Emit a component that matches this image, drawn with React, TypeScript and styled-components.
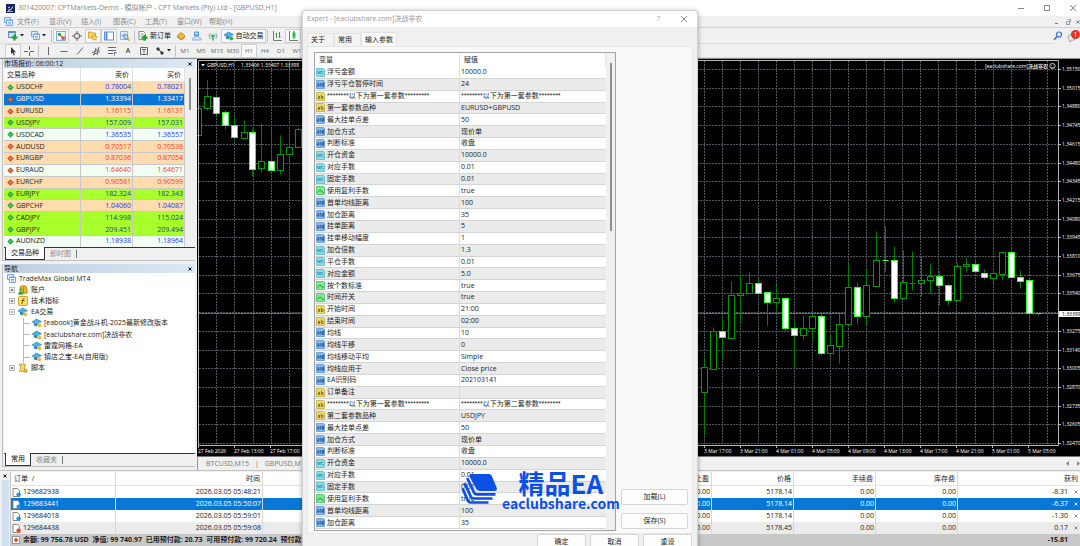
import React from "react";
import styled, { createGlobalStyle, css } from "styled-components";

const Global = createGlobalStyle`
  * { box-sizing: border-box; }
  html, body { margin: 0; padding: 0; }
  body {
    font-family: "Open Sans", "Noto Sans CJK SC", sans-serif;
    font-size: 7px;
    line-height: 10px;
    color: #1c1c1c;
    background: #f0f0f0;
  }
  button {
    font: inherit;
    color: inherit;
    background: none;
    border: 0;
    padding: 0;
    margin: 0;
    white-space: nowrap;
  }
  table { border-spacing: 0; border-collapse: separate; table-layout: fixed; }
  th, td { padding: 0; font-weight: 400; text-align: left; white-space: nowrap; overflow: hidden; }
  svg { display: block; flex: none; }
`;

/* ---------- shell ---------- */

const Page = styled.div`
  position: relative;
  display: flex;
  flex-direction: column;
  height: 100vh;
  overflow: hidden;
  background: #f0f0f0;
`;

const TitleBar = styled.header`
  display: flex;
  align-items: center;
  flex: none;
  height: 16px;
  padding: 0 3px 0 6px;
  gap: 3px;
  background: #fff;
  color: #868686;
`;

const Spacer = styled.div`
  flex: 1;
`;

const WindowButtons = styled.div<{ $gap: number }>`
  display: flex;
  align-items: center;
  gap: ${(p) => p.$gap}px;
`;

const MenuBar = styled.nav`
  display: flex;
  align-items: center;
  flex: none;
  height: 12px;
  padding-left: 4px;
  border-bottom: 1px solid #d2d2d2;
  color: #8c8c8c;
`;

const MenuItem = styled.button`
  width: 32px;
  text-align: left;
`;

const MenuIcon = styled.span`
  width: 13px;
`;

const ToolBars = styled.div`
  display: flex;
  flex: none;
  height: 31px;
  border-bottom: 1px solid #8e8e8e;
`;

const ToolRows = styled.div`
  flex: 1;
`;

const ToolBar = styled.div<{ $height: number }>`
  display: flex;
  align-items: center;
  height: ${(p) => p.$height}px;
  padding-left: 5px;
  border-bottom: 1px solid #dedede;
`;

const Tool = styled.button<{ $width?: number; $on?: boolean; $dim?: boolean }>`
  display: flex;
  align-items: center;
  justify-content: center;
  gap: 2px;
  width: ${(p) => p.$width ?? 16}px;
  height: 14px;
  ${(p) =>
    p.$on &&
    css`
      background: #f8f8f8;
      border: 1px solid #cfcfcf;
    `}
  color: ${(p) => (p.$dim ? "#666" : "#111")};
  font-size: ${(p) => (p.$dim ? 6 : 7)}px;
`;

const Divider = styled.span`
  width: 1px;
  height: 12px;
  margin: 0 1px;
  background: #c4c4c4;
`;

const Alerts = styled.div`
  display: flex;
  align-items: flex-start;
  gap: 4px;
  padding-top: 3px;
`;

const BellButton = styled.button`
  position: relative;
  width: 13px;
  height: 12px;
`;

const Badge = styled.span`
  position: absolute;
  right: 0;
  top: -1px;
  width: 9px;
  height: 9px;
  border-radius: 5px;
  background: #e23222;
  color: #fff;
  line-height: 9px;
  text-align: center;
`;

const Workspace = styled.div`
  display: flex;
  flex: 1;
  min-height: 0;
`;

/* ---------- left docks ---------- */

const Docks = styled.aside`
  display: flex;
  flex-direction: column;
  flex: none;
  width: 197px;
  padding: 0 2px 3px 2px;
  gap: 3px;
`;

const Dock = styled.section<{ $grow?: boolean }>`
  display: flex;
  flex-direction: column;
  min-height: 0;
  border: solid #c0c0c0;
  border-width: 0 0 1px 1px;
  padding-left: 1px;
  ${(p) => p.$grow && "flex: 1;"}
`;

const DockTitle = styled.div`
  display: flex;
  align-items: center;
  justify-content: space-between;
  flex: none;
  height: 9px;
  padding-right: 3px;
  background: linear-gradient(90deg, #bccfe2, #dbe8f5);
  line-height: 9px;
`;

const DockTabs = styled.div`
  display: flex;
  flex: none;
  height: 13px;
  padding-left: 1px;
  border-top: 1px solid #333;
`;

const DockTab = styled.button<{ $on?: boolean }>`
  height: 12px;
  padding: 0 5px;
  color: ${(p) => (p.$on ? "#111" : "#8a8a8a")};
  ${(p) =>
    p.$on &&
    css`
      margin-top: -1px;
      height: 13px;
      background: #fff;
      border: solid #333;
      border-width: 0 1px 1px 1px;
    `}
`;

const TabBar = styled.span`
  width: 1px;
  height: 8px;
  margin-top: 2px;
  background: #777;
`;

const QuoteArea = styled.div`
  display: flex;
  height: 179px;
  overflow: hidden;
`;

const QuoteTable = styled.table`
  width: 181px;
  height: 180px;
  flex: none;

  th {
    height: 14px;
    background: #fff;
    border: solid #e2e2e2;
    border-width: 0 1px 1px 0;
    padding: 0 3px;
  }
  td {
    border: solid #c8c8c8;
    border-width: 0 1px 1px 0;
    padding: 0 1px 0 3px;
  }
  th + th, td + td { text-align: right; }
`;

type Tone = "sand" | "lime" | "mint" | "pick";

const tones: Record<Tone, string> = {
  sand: "#ffdcae",
  lime: "#a9ff2b",
  mint: "#f0fff2",
  pick: "#0878d8",
};

const QuoteRow = styled.tr<{ $tone: Tone; $ink: string }>`
  background: ${(p) => tones[p.$tone]};
  color: ${(p) => (p.$tone === "pick" ? "#fff" : "#222")};
  td + td { color: ${(p) => p.$ink}; }
`;

const Scroll = styled.div<{ $top: number; $length: number }>`
  flex: 1;
  background: #f0f0f0;
  padding: ${(p) => p.$top}px 0 0 4px;

  &::before {
    content: "";
    display: block;
    width: 2px;
    height: ${(p) => p.$length}px;
    background: #8f8f8f;
  }
`;

const CellLine = styled.span<{ $gap?: number }>`
  display: flex;
  align-items: center;
  height: 10px;
  gap: ${(p) => p.$gap ?? 3}px;
`;

const Tree = styled.div`
  flex: 1;
  background: #fff;
`;

const TreeRows = styled.ul`
  display: grid;
  grid-auto-rows: 1fr;
  height: 101px;
  margin: 0;
  padding: 0;
  list-style: none;
`;

const TreeRow = styled.li<{ $level: number }>`
  display: flex;
  align-items: center;
  gap: ${(p) => (p.$level === 2 ? 2 : 3)}px;
  padding-left: ${(p) => [3, 5, 19][p.$level]}px;
  white-space: nowrap;
`;

const Branch = styled.span`
  width: 7px;
  height: 100%;
  border-left: 1px solid #bbb;
  background: linear-gradient(#bbb, #bbb) 0 5px / 7px 1px no-repeat;
`;

/* ---------- chart ---------- */

const ChartColumn = styled.main`
  display: flex;
  flex-direction: column;
  flex: 1;
  min-width: 0;
`;

const ChartFrame = styled.div`
  flex: 1;
  min-height: 0;
  overflow: hidden;
  background: #000;
  border-bottom: 1px solid #777;

  svg { width: 100%; height: 100%; }
  text { font-size: 5px; font-weight: 500; fill: #fff; }
`;

const ChartTabs = styled.div`
  display: flex;
  align-items: center;
  flex: none;
  height: 13px;
  padding: 0 0 0 8px;
  gap: 6px;
  border-left: 1px solid #999;
  color: #777;
`;

const Arrows = styled.div`
  display: flex;
  gap: 8px;
  margin-left: auto;
`;

/* ---------- terminal ---------- */

const Terminal = styled.section`
  display: flex;
  flex: none;
  height: 76px;
  padding-top: 1px;
  border-top: 1px solid #c2c2c2;
`;

const TerminalRail = styled.div`
  display: flex;
  flex-direction: column;
  align-items: center;
  gap: 2px;
  width: 11px;
  flex: none;
  padding-top: 2px;
  border-right: 1px solid #c2c2c2;

  &::after {
    content: "";
    flex: 1;
    width: 7px;
    background: #cfe0f2;
  }
`;

const OrderTable = styled.table`
  flex: 1;
  width: 100%;
  height: 74px;
  background: #fff;

  th, td {
    text-align: right;
    padding: 0 1px;
    border-right: 1px solid #d8d8d8;
  }
  th { height: 14px; padding-right: 2px; border-bottom: 1px solid #e2e2e2; }
  th:first-child, td:first-child { text-align: left; }
  th:first-child { padding-left: 3px; }
  th:last-child, td:last-child { border-right: 0; }
`;

const OrderRow = styled.tr<{ $state: string }>`
  background: ${(p) => (p.$state === "pick" ? "#0878d8" : p.$state === "alt" ? "#ebebeb" : "#fff")};
  color: ${(p) => (p.$state === "pick" ? "#fff" : "#222")};
`;

const SumRow = styled.tr`
  background: #c8c8c8;

  td { border: 0; font-weight: 700; overflow: hidden; }
  td:last-child { padding-right: 12px; }
`;

const SumLine = styled(CellLine)`
  white-space: pre;
`;

const Profit = styled.span`
  display: flex;
  align-items: center;
  justify-content: flex-end;
  gap: 6px;
  padding-right: 1px;
`;

/* ---------- dialog ---------- */

const Dialog = styled.section`
  position: absolute;
  top: 10px;
  left: calc(50% - 238px);
  width: 396px;
  height: 546px;
  display: flex;
  flex-direction: column;
  overflow: hidden;
  border: 1px solid #d0d0d0;
  border-radius: 4px;
  background: #f0f0f0;
  box-shadow: 0 1px 5px rgba(0, 0, 0, 0.35);
`;

const DialogTitle = styled.header`
  display: flex;
  align-items: center;
  justify-content: space-between;
  height: 16px;
  padding: 0 9px 0 4px;
  background: #fff;
  color: #979797;
`;

const DialogTabs = styled.div`
  display: flex;
  align-items: flex-end;
  height: 19px;
  padding-left: 4px;
`;

const DialogTab = styled.button<{ $on?: boolean }>`
  width: ${(p) => (p.$on ? 36 : 27)}px;
  height: ${(p) => (p.$on ? 14 : 13)}px;
  padding-left: 3px;
  text-align: left;
  border: 1px solid #e4e4e4;
  border-bottom: 0;
  background: ${(p) => (p.$on ? "#fafafa" : "#f3f3f3")};
`;

const DialogPanel = styled.div`
  display: flex;
  align-items: flex-end;
  gap: 5px;
  margin: 0 4px;
  padding: 5px 4px 2px 6px;
  border: 1px solid #e6e6e6;
  background: #f9f9f9;
`;

const ParamBox = styled.div`
  display: flex;
  width: 302px;
  height: 479px;
  border: 1px solid #a2a2aa;
  background: #fff;
`;

const ParamTable = styled.table`
  width: 291px;
  height: 476px;
  flex: none;

  th { height: 14px; padding-left: 4px; border-right: 1px solid #e4e4e4; }
  td { border-bottom: 1px solid #d4d4d4; border-right: 1px solid #dcdcdc; }
  td:first-child { padding-left: 1px; }
  td:last-child { padding-left: 1px; border-right-color: transparent; }
  tbody tr:nth-child(even) { background: #ebebeb; }
`;

const ParamRow = styled.tr<{ $heading: boolean }>`
  ${(p) => p.$heading && `font-family: "Liberation Sans", "Noto Sans CJK SC", sans-serif;`}
`;

const SideButtons = styled.div`
  display: flex;
  flex-direction: column;
  flex: 1;
  gap: 8px;
  padding-bottom: 2px;
`;

const PushButton = styled.button`
  height: 16px;
  min-width: 49px;
  border: 1px solid #d6d6d6;
  border-radius: 2px;
  background: #fdfdfd;
`;

const DialogFoot = styled.footer`
  display: flex;
  justify-content: flex-end;
  gap: 4px;
  padding-right: 5px;
`;

const Brand = styled.div`
  position: absolute;
  left: calc(50% - 79px);
  top: 470px;
  display: flex;
  align-items: flex-start;
  gap: 5px;
  color: #0b50e6;
  font-family: "Noto Sans CJK SC", sans-serif;
  font-weight: 700;
  white-space: nowrap;

  svg { margin-top: 4px; }
`;

const BrandText = styled.div`
  display: flex;
  flex-direction: column;
  align-items: center;
`;

const BrandName = styled.div`
  font-size: 26px;
  line-height: 26px;
`;

const BrandSite = styled.div`
  font-size: 14px;
  line-height: 14px;
`;

/* ---------- icons ---------- */

const Svg = ({ w = 10, h = 10, box, children }: { w?: number; h?: number; box?: string; children: React.ReactNode }) => (
  <svg width={w} height={h} viewBox={box ?? `0 0 ${w} ${h}`} fill="none" aria-hidden="true">
    {children}
  </svg>
);

const Caret = () => (
  <Svg w={4} h={3}>
    <path d="M0 0h4L2 2.5z" fill="#222" />
  </Svg>
);

const Close = ({ size = 4, color = "#111" }: { size?: number; color?: string }) => (
  <Svg w={size} h={size} box="0 0 8 8">
    <path d="M1 1l6 6M7 1L1 7" stroke={color} strokeWidth={size > 5 ? 1 : 2} />
  </Svg>
);

const Plus = ({ x, y }: { x: number; y: number }) => (
  <path d={`M${x} ${y - 3}v6M${x - 3} ${y}h6`} stroke="#15a32c" strokeWidth="2.2" />
);

const AppIcon = () => (
  <Svg w={9} h={9}>
    <rect width="9" height="9" fill="#14265c" />
    <path d="M2 6.5l3-1 2-3M2 4l2-1" stroke="#e8eefc" />
    <path d="M1 7.5h6" stroke="#8fb0ea" />
  </Svg>
);

const Windows = () => (
  <Svg w={9} h={9}>
    <path d="M.5.5h6v5h-6z" fill="#dceafd" stroke="#76a5e4" />
    <path d="M2.5 3h6v5.5h-6z" fill="#fff" stroke="#76a5e4" />
    <path d="M2.5 3.5h6M4 5.5h3M4 7h3" stroke="#76a5e4" />
  </Svg>
);

const NewChart = () => (
  <Svg>
    <path d="M.5.5h7v6h-7z" fill="#cfe2f8" stroke="#5b8ccc" />
    <path d="M.5 1.5h7" stroke="#5b8ccc" />
    <Plus x={6.5} y={6.5} />
  </Svg>
);

const MarketIcon = () => (
  <Svg>
    <rect x=".5" y=".5" width="9" height="9" fill="#e9f2fd" stroke="#7fabe0" />
    <path d="M2 3.500h3M3.500 2v3" stroke="#22a438" strokeWidth="1.800" />
    <path d="M5 5l3 3M8 5.500V8H5.500" stroke="#e2472c" strokeWidth="1.600" />
  </Svg>
);

const Target = () => (
  <Svg>
    <circle cx="5" cy="5" r="2.800" stroke="#666" />
    <path d="M5 0v3.600M5 6.400V10M0 5h3.600M6.400 5H10" stroke="#666" />
  </Svg>
);

const FolderStar = () => (
  <Svg>
    <path d="M.5 1h3l1 1h3v5h-7z" fill="#f7d35c" stroke="#d3a63a" />
    <path d="M6.500 3.600l.9 1.900 2.100.2-1.600 1.500.5 2.100-1.900-1.100-1.900 1.100.5-2.100-1.600-1.500 2.100-.2z" fill="#fdea4e" stroke="#c99a20" strokeWidth=".7" />
  </Svg>
);

const PanelIcon = () => (
  <Svg>
    <rect x=".5" y="1" width="9" height="8" fill="#fff" stroke="#5b90d8" />
    <path d="M2.500 1v8" stroke="#5b90d8" strokeWidth="2" />
  </Svg>
);

const TesterIcon = () => (
  <Svg>
    <path d="M.5.5h7v8h-7z" fill="#e8f1fc" stroke="#8db1df" />
    <path d="M1.500 3.500l1.500 2 1.500-3 1.500 2" stroke="#6d98d0" />
    <circle cx="6" cy="6" r="2" fill="#d6eafc" stroke="#5b86b8" />
    <path d="M7.500 7.500L9.500 9.700" stroke="#c89a2c" strokeWidth="1.300" />
  </Svg>
);

const NewOrder = () => (
  <Svg>
    <path d="M1 .5h4.500l2 2v6H1z" fill="#fff" stroke="#888" />
    <path d="M2.500 3h3M2.500 5h2" stroke="#999" />
    <Plus x={6.5} y={6.7} />
  </Svg>
);

const BookIcon = () => (
  <Svg>
    <path d="M1 5l4-3.500L9 5 5.500 8.500z" fill="#f0b93a" stroke="#b37d14" strokeWidth=".8" />
    <path d="M1 5.200v1.400l4.500 3L9 6.400V5L5.500 8.400z" fill="#d08f1c" />
  </Svg>
);

const CloudUser = () => (
  <Svg>
    <rect x="2" y=".5" width="5" height="5" rx="1" fill="#4f97e6" />
    <circle cx="4.500" cy="2.600" r="1.200" fill="#d9ebfd" />
    <path d="M.8 9c-.6-2 1-3 2-2.600C4 4.800 6.400 5 7 6.600c1.800 0 2.400 1 2 2.400z" fill="#d7e7fa" stroke="#6c9fdc" strokeWidth=".8" />
  </Svg>
);

const Signal = () => (
  <Svg>
    <path d="M2.500 8a4 4 0 0 1 0-6M7.500 8a4 4 0 0 0 0-6" stroke="#79a5d8" />
    <path d="M3.800 6.500a2 2 0 0 1 0-3M6.200 6.500a2 2 0 0 0 0-3" stroke="#5aa87a" />
    <path d="M5 4.500V9.500" stroke="#2fa648" strokeWidth="1.400" />
    <circle cx="5" cy="4.500" r="1" fill="#2fa648" />
  </Svg>
);

const Hat = ({ mark = "#f1b52c" }: { mark?: string }) => (
  <Svg>
    <path d="M2 4.500h5v3q-2.500 1.500-5 0z" fill="#2f7eb4" />
    <path d="M0 4l4.500-3L9.500 3.600 5 6.400z" fill="#4eb2e4" stroke="#2a7cad" strokeWidth=".6" />
    <circle cx="7.400" cy="7.400" r="2.100" fill={mark} stroke="#fff" strokeWidth=".4" />
  </Svg>
);

const BarsIcon = () => (
  <Svg>
    <path d="M1.500 0v9.500H10" stroke="#777" />
    <path d="M4.500 2v5M4.500 3h-1M7.500 1v6M7.500 6h1" stroke="#22a438" />
  </Svg>
);

const CandlesIcon = () => (
  <Svg>
    <path d="M1.500 0v9.500H10" stroke="#777" />
    <path d="M6 0v8" stroke="#15892a" />
    <rect x="4.500" y="1.500" width="3" height="5" fill="#2fc04a" />
  </Svg>
);

const SearchIcon = () => (
  <Svg>
    <circle cx="6" cy="3.600" r="2.600" stroke="#3a6fd2" strokeWidth="1.200" />
    <path d="M4 5.600L1 8.800" stroke="#3a6fd2" strokeWidth="1.600" />
  </Svg>
);

const Stroke = ({ d }: { d: string }) => (
  <Svg>
    <path d={d} stroke="#666" />
  </Svg>
);

const Tick = ({ up }: { up: boolean }) => (
  <Svg w={7} h={7}>
    <path d="M3.500 .8L6.200 3.500 3.500 6.200.8 3.500z" fill={up ? "#2cb845" : "#e4572e"} stroke={up ? "#1d8f34" : "#b8441f"} strokeWidth=".8" />
    <path d="M3.500 2.600v1.800M2.600 3.500h1.800" stroke={up ? "#7fdd90" : "#ff9d7c"} strokeWidth=".6" />
  </Svg>
);

const Expander = ({ open }: { open?: boolean }) => (
  <Svg w={6} h={6} box="0 0 7 7">
    <rect x=".5" y=".5" width="6" height="6" fill="#fff" stroke="#b0b0b0" />
    <path d={open ? "M2 3.500h3" : "M2 3.500h3M3.500 2v3"} stroke="#3f4f80" />
  </Svg>
);

const Accounts = () => (
  <Svg>
    <path d="M2 1.500q3-2 6.500 0L9.500 8 2.500 9z" fill="#e5b430" stroke="#a97f14" strokeWidth=".7" />
    <path d="M5.500 2v6" stroke="#a97f14" />
    <circle cx="2.600" cy="4.800" r="1.400" fill="#37b64c" />
    <path d="M0 9.500q.5-3 2.600-3t2.600 3z" fill="#23a03a" />
  </Svg>
);

const FuncIcon = () => (
  <Svg>
    <rect x=".5" y=".5" width="9" height="9" rx="1" fill="#f8e06a" stroke="#c8a52c" />
    <path d="M6.500 2.500q-1.400-.4-1.600 1.200L4.400 6.600q-.2 1.400-1.400 1M3.500 4.500h3" stroke="#6c5510" />
  </Svg>
);

const ScriptIcon = () => (
  <Svg>
    <path d="M1.500 1h6v1.600h-1v4.400h1.500v1.600H1.500V7h1V2.600h-1z" fill="#f7d667" stroke="#bd9125" strokeWidth=".7" />
    <circle cx="7.600" cy="7.800" r="1.800" fill="#f1b52c" stroke="#a97f14" strokeWidth=".5" />
  </Svg>
);

const OrderIcon = ({ color = "#2c8fe0" }: { color?: string }) => (
  <Svg w={9} h={9}>
    <path d="M1 .5h4.500l2 2v6H1z" fill="#fff" stroke="#8a8a8a" />
    <circle cx="6.600" cy="6.600" r="2.200" fill={color} />
  </Svg>
);

type Kind = "v" | "i" | "s" | "b";

const kindColors: Record<Kind, [string, string, string]> = {
  v: ["#8adbe8", "#5ab8c8", "#2a8594"],
  i: ["#86baec", "#5a94d0", "#1f5090"],
  s: ["#ecdc74", "#c0aa3c", "#6f5f14"],
  b: ["#80ea90", "#45bb5a", "#14782a"],
};

const KindIcon = ({ kind }: { kind: Kind }) => {
  const [fill, edge, ink] = kindColors[kind];
  const marks: Record<Kind, string> = {
    v: "M1.500 3l1.200 3L4 3M5 6V3M5 3.500h1.500M6.500 5.500h1",
    i: "M1.500 3.500h1v3M2 5H1.500v1.500M4 6.500v-3h1v3M7.500 3.500h-1v3h1v-4",
    s: "M2 4.200H3.500v2.300H2.300V5.300H3.500M5.300 2.500v4H7V4.500H5.300",
    b: "M1.500 6.500L4 3.800l2 2.200 1.800.5",
  };
  return (
    <Svg w={9} h={9}>
      <path d="M.5.5h7l1 1v7h-8z" fill={fill} stroke={edge} strokeWidth=".8" />
      <path d={marks[kind]} stroke={ink} strokeWidth=".8" />
    </Svg>
  );
};

const BrandMark = () => (
  <Svg w={36} h={30}>
    <path d="M10.500 0h17.500q2 0 2.700 1.700L35.800 14q.8 3-2.300 3H19q-2.500 0-3.700-2L8.700 3Q8 0 10.500 0z" fill="#0b50e6" />
    <g stroke="#0b50e6" strokeWidth="2.700" strokeLinejoin="round">
      <path d="M6.200 4L13 18.500q1 1.900 3 1.900H34.500" />
      <path d="M3.600 9L9.800 22.600q1 1.900 3 1.900H31.500" />
      <path d="M1.600 14.500L6.800 26.600q1 1.900 3 1.900H27.500" />
    </g>
  </Svg>
);

/* ---------- data ---------- */

const menus = ["文件(F)", "显示(V)", "插入(I)", "图表(C)", "工具(T)", "窗口(W)", "帮助(H)"];
const frames = ["M1", "M5", "M15", "M30", "H1", "H4", "D1", "W1"];

const blue = "#2a2aff";
const red = "#ff3a1c";
const navy = "#1a3a9a";

const quotes: [string, string, string, Tone, string, boolean][] = [
  ["USDCHF", "0.78004", "0.78021", "sand", blue, true],
  ["GBPUSD", "1.33394", "1.33417", "pick", "#fff", false],
  ["EURUSD", "1.16115", "1.16131", "sand", red, false],
  ["USDJPY", "157.009", "157.031", "lime", navy, true],
  ["USDCAD", "1.36535", "1.36557", "mint", blue, true],
  ["AUDUSD", "0.70517", "0.70536", "sand", red, false],
  ["EURGBP", "0.87036", "0.87054", "sand", red, false],
  ["EURAUD", "1.64640", "1.64671", "mint", red, false],
  ["EURCHF", "0.90581", "0.90599", "sand", red, false],
  ["EURJPY", "182.324", "182.343", "lime", navy, true],
  ["GBPCHF", "1.04060", "1.04087", "sand", blue, true],
  ["CADJPY", "114.998", "115.024", "lime", navy, true],
  ["GBPJPY", "209.451", "209.494", "lime", navy, true],
  ["AUDNZD", "1.18938", "1.18964", "mint", blue, true],
];

const experts = ["[eabook]黄金战斗机-2025最新修改版本", "[eaclubshare.com]决战非农", "雷霆网格-EA", "镇店之宝-EA(自用版)"];

const params: [Kind, string, string][] = [
  ["v", "浮亏金额", "10000.0"],
  ["i", "浮亏平仓暂停时间", "24"],
  ["s", "********以下为第一套参数*********", "********以下为第一套参数********"],
  ["s", "第一套参数品种", "EURUSD+GBPUSD"],
  ["i", "最大挂单点差", "50"],
  ["i", "加仓方式", "现价单"],
  ["i", "判断标准", "收盘"],
  ["v", "开仓资金", "10000.0"],
  ["v", "对应手数", "0.01"],
  ["v", "固定手数", "0.01"],
  ["b", "使用复利手数", "true"],
  ["i", "首单均线距离", "100"],
  ["i", "加仓距离", "35"],
  ["i", "挂单距离", "5"],
  ["i", "挂单移动幅度", "1"],
  ["v", "加仓倍数", "1.3"],
  ["v", "平仓手数", "0.01"],
  ["v", "对应金额", "5.0"],
  ["b", "按个数标准", "true"],
  ["b", "时间开关", "true"],
  ["s", "开始时间", "21:00"],
  ["s", "结束时间", "02:00"],
  ["i", "均线", "10"],
  ["i", "均线平移", "0"],
  ["i", "均线移动平均", "Simple"],
  ["i", "均线应用于", "Close price"],
  ["i", "EA识别码", "202103141"],
  ["s", "订单备注", ""],
  ["s", "********以下为第一套参数*********", "********以下为第二套参数********"],
  ["s", "第二套参数品种", "USDJPY"],
  ["i", "最大挂单点差", "50"],
  ["i", "加仓方式", "现价单"],
  ["i", "判断标准", "收盘"],
  ["v", "开仓资金", "10000.0"],
  ["v", "对应手数", "0.01"],
  ["v", "固定手数", "0.01"],
  ["b", "使用复利手数", "true"],
  ["i", "首单均线距离", "100"],
  ["i", "加仓距离", "35"],
];

const orders: [string, string, string, string, string, string, string][] = [
  ["129682938", "2026.03.05 05:48:21", "5178.14", "-8.31", "", "#2c8fe0", "#888"],
  ["129683441", "2026.03.05 05:50:07", "5178.14", "-6.37", "pick", "#2c8fe0", "#dfeaf6"],
  ["129684018", "2026.03.05 05:59:01", "5178.14", "-1.30", "", "#2c8fe0", "#888"],
  ["129684438", "2026.03.05 05:59:08", "5178.45", "0.17", "alt", "#e04a2a", "#888"],
];

/* x, high, low, body top, body bottom, falling; three units to a pixel */
type Candle = [number, number, number, number, number, number];

const recent: Candle[] = [
  [28, 476, 705, 502, 575, 0], [55, 380, 505, 394, 506, 0], [82, 353, 478, 394, 412, 1],
  [109, 242, 415, 286, 415, 0], [136, 222, 368, 278, 286, 0], [163, 216, 278, 250, 278, 0],
  [190, 234, 280, 250, 280, 1], [217, 275, 374, 275, 305, 1], [244, 252, 327, 293, 306, 0],
  [271, 291, 396, 294, 385, 1], [298, 363, 498, 385, 404, 1], [325, 345, 418, 385, 404, 0],
  [353, 343, 416, 348, 385, 0], [380, 337, 465, 348, 458, 1], [407, 405, 466, 435, 458, 0],
  [434, 338, 489, 371, 437, 0], [461, 192, 377, 262, 373, 0], [488, 247, 372, 262, 348, 1],
  [515, 204, 376, 256, 347, 0], [543, 93, 257, 181, 257, 0], [570, 77, 212, 181, 181, 1],
  [597, 138, 307, 181, 294, 1], [624, 150, 295, 247, 295, 0], [651, 154, 270, 248, 248, 0],
  [678, 168, 287, 239, 250, 0], [705, 188, 279, 228, 241, 0], [733, 211, 316, 228, 256, 1],
  [760, 250, 315, 255, 299, 1], [787, 190, 299, 199, 299, 0], [814, 171, 215, 192, 199, 0],
  [841, 181, 212, 192, 212, 1], [868, 206, 238, 220, 232, 1], [895, 211, 250, 220, 233, 0],
  [922, 153, 240, 157, 221, 0], [949, 147, 237, 157, 230, 1], [976, 209, 263, 231, 243, 1],
  [1003, 234, 353, 241, 340, 1], [1030, 338, 344, 340, 340, 1],
];

const earlier: Candle[] = [
  [11, 127, 272, 158, 240, 0], [38, 75, 164, 123, 160, 0], [65, 119, 182, 127, 173, 1],
  [92, 164, 221, 172, 211, 1], [119, 185, 254, 211, 247, 1], [147, 195, 252, 232, 250, 0],
  [173, 218, 364, 230, 341, 1], [200, 205, 350, 318, 340, 0], [228, 220, 345, 318, 345, 1],
  [255, 239, 357, 297, 344, 0], [283, 237, 323, 275, 298, 0], [310, 217, 275, 223, 275, 0],
];

const prices = [
  "1.35150", "1.35015", "1.34880", "1.34745", "1.34615", "1.34480", "1.34345", "1.34215", "1.34080", "1.33945",
  "1.33810", "1.33675", "1.33540", "", "1.33275", "1.33140", "1.33005", "1.32870", "1.32735", "1.32605", "1.32470",
];

const dates: [number, string][] = [
  [198, "27 Feb 2026"], [234, "27 Feb 13:00"], [270, "27 Feb 17:00"],
  [704, "3 Mar 17:00"], [740, "3 Mar 21:00"], [776, "4 Mar 01:00"], [812, "4 Mar 05:00"], [848, "4 Mar 09:00"],
  [884, "4 Mar 13:00"], [920, "4 Mar 17:00"], [956, "4 Mar 21:00"], [992, "5 Mar 01:00"], [1028, "5 Mar 05:00"],
];

const Candles = ({ data, x0, y0 }: { data: Candle[]; x0: number; y0: number }) => (
  <>
    {data.map(([x, high, low, top, bottom, falling]) => {
      const cx = Math.floor(x0 + x / 3) + 0.5;
      const at = (v: number) => Math.round(y0 + v / 3) + 0.5;
      const flat = top === bottom;
      const edge = falling ? "#2cff2c" : "#009c00";
      return (
        <g key={x}>
          <path d={`M${cx} ${at(high)}V${at(low)}`} stroke="#008000" />
          {flat ? (
            <path d={`M${cx - 3} ${at(top)}h6`} stroke={edge} />
          ) : (
            <rect x={cx - 3} y={at(top)} width="6" height={at(bottom) - at(top)} fill={falling ? "#fff" : "#000"} stroke={edge} />
          )}
        </g>
      );
    })}
  </>
);

const PriceChart = () => (
  <svg viewBox="197 59 883 397" preserveAspectRatio="xMinYMin slice" fill="none" role="img" aria-label="GBPUSD,H1">
    <g stroke="#4e5962" strokeDasharray="2 1">
      {prices.map((_, i) => (
        <path key={i} d={`M199 ${Math.round(69 + 18.7 * i) + 0.5}H1058`} />
      ))}
      {Array.from({ length: 47 }, (_, k) => (
        <path key={k} d={`M${Math.floor(216.9 + 18.05 * k) + 0.5} 61V445`} />
      ))}
    </g>
    <path d="M199 313.500H1058" stroke="#5c6872" />
    <Candles data={earlier} x0={195} y0={55} />
    <Candles data={recent} x0={695} y0={200} />
    <path d="M198.500 60.500H1058.500V445.500H198.500z" stroke="#b8b8b8" />
    <path d="M201 64h4l-2 2.500z" fill="#e4e4e4" />
    <text x="207" y="67">GBPUSD,H1</text>
    <text x="241" y="67">1.33406 1.33407 1.33398</text>
    <text x="1048" y="68" textAnchor="end">[eaclubshare.com]决战非农</text>
    <circle cx="1052.500" cy="66" r="2.700" stroke="#e4e4e4" strokeWidth=".8" />
    <path d="M1051 67q1.500 1.200 3 0M1051.300 65h.8M1053 65h.8" stroke="#e4e4e4" strokeWidth=".7" />
    {prices.map((price, i) => {
      const y = Math.round(69 + 18.7 * i);
      return (
        price && (
          <g key={price}>
            <path d={`M1059 ${y + 0.5}h2`} stroke="#b8b8b8" />
            <text x="1062" y={y + 2}>{price}</text>
          </g>
        )
      );
    })}
    <rect x="1059" y="311" width="21" height="6" fill="#fff" />
    <text x="1062" y="316" style={{ fill: "#000" }}>1.33399</text>
    {dates.map(([x, label]) => (
      <g key={label}>
        <path d={`M${x + 0.5} 446v2`} stroke="#b8b8b8" />
        <text x={x} y="453">{label}</text>
      </g>
    ))}
  </svg>
);

/* ---------- sections ---------- */

const Header = () => (
  <>
    <TitleBar>
      <AppIcon />
      <span>301420007: CPTMarkets-Demo - 模拟帐户 - CPT Markets (Pty) Ltd - [GBPUSD,H1]</span>
      <Spacer />
      <WindowButtons $gap={18}>
        <button aria-label="最小化"><Svg w={8} h={8}><path d="M1 4.500h6" stroke="#888" /></Svg></button>
        <button aria-label="最大化"><Svg w={8} h={8}><rect x="1.500" y="1.500" width="5" height="5" stroke="#888" /></Svg></button>
        <button aria-label="关闭"><Close size={8} color="#888" /></button>
      </WindowButtons>
    </TitleBar>
    <MenuBar>
      <MenuIcon><Windows /></MenuIcon>
      {menus.map((m) => <MenuItem key={m}>{m}</MenuItem>)}
      <Spacer />
      <WindowButtons $gap={5}>
        <button aria-label="最小化图表"><Svg w={6} h={6}><path d="M1 4.500h3" stroke="#6a7f96" /></Svg></button>
        <button aria-label="还原图表"><Svg w={6} h={6}><path d="M1.500 2.500h3v3h-3zM3 .5h2.500V3" stroke="#8a9db2" /></Svg></button>
        <button aria-label="关闭图表"><Close color="#6a7f96" /></button>
      </WindowButtons>
    </MenuBar>
    <ToolBars>
      <ToolRows>
        <ToolBar $height={16}>
          <Tool $width={22} aria-label="新图表"><NewChart /><Caret /></Tool>
          <Tool $width={23} aria-label="配置"><Windows /><Caret /></Tool>
          <Divider />
          <Tool $on aria-label="市场报价"><MarketIcon /></Tool>
          <Tool aria-label="数据窗口"><Target /></Tool>
          <Tool $on aria-label="导航"><FolderStar /></Tool>
          <Tool $on aria-label="终端"><PanelIcon /></Tool>
          <Tool aria-label="策略测试"><TesterIcon /></Tool>
          <Divider />
          <Tool $width={37}><NewOrder />新订单</Tool>
          <Tool aria-label="编辑器"><BookIcon /></Tool>
          <Tool aria-label="社区"><CloudUser /></Tool>
          <Tool aria-label="信号"><Signal /></Tool>
          <Tool $width={45} $on><Hat mark="#2fae46" />自动交易</Tool>
          <Divider />
          <Tool aria-label="柱状图"><BarsIcon /></Tool>
          <Tool $on aria-label="阴阳烛"><CandlesIcon /></Tool>
        </ToolBar>
        <ToolBar $height={14}>
          <Tool $on aria-label="光标"><Svg><path d="M3 1v7l1.600-1.500L5.800 9.400l1.100-.5-1.200-2.700H8z" fill="#333" /></Svg></Tool>
          <Tool aria-label="十字准线"><Stroke d="M5.500 0v4M5.500 6v4M0 5.500h4M6 5.500h4" /></Tool>
          <Divider />
          <Tool aria-label="垂直线"><Stroke d="M5.500 1v8" /></Tool>
          <Tool aria-label="水平线"><Stroke d="M1.500 5.500h7" /></Tool>
          <Tool aria-label="趋势线"><Stroke d="M2 8.500l6-7" /></Tool>
          <Tool aria-label="通道"><Stroke d="M1 7l7-4M2 9l7-4M3 9l2-7M6 9l2-8" /></Tool>
          <Tool aria-label="斐波那契"><Stroke d="M1 1.500h8M1 4.500h8M1 7.500h5M7.500 9.500v-3h2" /></Tool>
          <Tool>A</Tool>
          <Tool aria-label="文本标签"><Stroke d="M1.500 1.500h7v7h-7zM3 3.500h4M5 3.500v4" /></Tool>
          <Tool $width={22} aria-label="箭头"><Svg><path d="M1 3l2-2 2 2-2 2zM5 7l2-2 2 2-2 2z" fill="#333" /><path d="M4 4l3 3" stroke="#333" /></Svg><Caret /></Tool>
          <Divider />
          {frames.map((f) => <Tool key={f} $dim $on={f === "H1"}>{f}</Tool>)}
        </ToolBar>
      </ToolRows>
      <Alerts>
        <button aria-label="搜索"><SearchIcon /></button>
        <BellButton aria-label="通知">
          <Svg w={10} h={10}><path d="M1 6q0-4 4-4t4 3-4 3.500L2.500 10V8Q1 7 1 6z" fill="#e6e6e6" stroke="#9b9b9b" strokeWidth=".8" /></Svg>
          <Badge>1</Badge>
        </BellButton>
      </Alerts>
    </ToolBars>
  </>
);

const MarketWatch = () => (
  <Dock>
    <DockTitle>市场报价: 06:00:12<button aria-label="关闭"><Close /></button></DockTitle>
    <QuoteArea>
      <QuoteTable>
        <colgroup><col style={{ width: 77 }} /><col style={{ width: 52 }} /><col style={{ width: 52 }} /></colgroup>
        <thead><tr><th>交易品种</th><th>卖价</th><th>买价</th></tr></thead>
        <tbody>
          {quotes.map(([name, bid, ask, tone, ink, up]) => (
            <QuoteRow key={name} $tone={tone} $ink={ink}>
              <td><CellLine $gap={2}><Tick up={up} />{name}</CellLine></td>
              <td>{bid}</td>
              <td>{ask}</td>
            </QuoteRow>
          ))}
        </tbody>
      </QuoteTable>
      <Scroll $top={10} $length={32} />
    </QuoteArea>
    <DockTabs><DockTab $on>交易品种</DockTab><DockTab>即时图</DockTab><TabBar /></DockTabs>
  </Dock>
);

const Navigator = () => (
  <Dock $grow>
    <DockTitle>导航<button aria-label="关闭"><Close /></button></DockTitle>
    <Tree>
      <TreeRows>
        <TreeRow $level={0}><Windows />TradeMax Global MT4</TreeRow>
        <TreeRow $level={1}><Expander /><Accounts />账户</TreeRow>
        <TreeRow $level={1}><Expander /><FuncIcon />技术指标</TreeRow>
        <TreeRow $level={1}><Expander open /><Hat />EA交易</TreeRow>
        {experts.map((name) => <TreeRow key={name} $level={2}><Branch /><Hat />{name}</TreeRow>)}
        <TreeRow $level={1}><Expander /><ScriptIcon />脚本</TreeRow>
      </TreeRows>
    </Tree>
    <DockTabs><DockTab $on>常用</DockTab><DockTab>收藏夹</DockTab><TabBar /></DockTabs>
  </Dock>
);

const Orders = () => (
  <Terminal>
    <TerminalRail><button aria-label="关闭"><Close /></button></TerminalRail>
    <OrderTable>
      <colgroup>
        <col style={{ width: 105 }} /><col style={{ width: 147 }} /><col />
        <col style={{ width: 82 }} /><col style={{ width: 82 }} /><col style={{ width: 82 }} /><col style={{ width: 122 }} />
      </colgroup>
      <thead>
        <tr><th>订单 &#160;∕</th><th>时间</th><th>止盈</th><th>价格</th><th>手续费</th><th>库存费</th><th>获利</th></tr>
      </thead>
      <tbody>
        {orders.map(([id, time, price, profit, state, color, cross]) => (
          <OrderRow key={id} $state={state}>
            <td><CellLine $gap={2}><OrderIcon color={color} />{id}</CellLine></td>
            <td>{time}</td>
            <td>0.00</td>
            <td>{price}</td>
            <td>0.00</td>
            <td>0.00</td>
            <td><Profit>{profit}<Close color={cross} /></Profit></td>
          </OrderRow>
        ))}
        <SumRow>
          <td colSpan={3}>
            <SumLine>
              <Svg w={8} h={8}><rect x=".5" y=".5" width="7" height="7" fill="#fff" stroke="#999" /><path d="M4 2v4M2 4h4" stroke="#e0401f" strokeWidth="1.600" /></Svg>
              余额: 99 756.78 USD  净值: 99 740.97  已用预付款: 20.73  可用预付款: 99 720.24  预付款
            </SumLine>
          </td>
          <td colSpan={4}>-15.81</td>
        </SumRow>
      </tbody>
    </OrderTable>
  </Terminal>
);

const ExpertDialog = () => (
  <Dialog role="dialog" aria-label="Expert">
    <DialogTitle>
      Expert - [eaclubshare.com]决战非农
      <WindowButtons $gap={20}>
        <button>?</button>
        <button aria-label="关闭"><Close size={8} color="#888" /></button>
      </WindowButtons>
    </DialogTitle>
    <DialogTabs>
      <DialogTab>关于</DialogTab><DialogTab>常用</DialogTab><DialogTab $on>输入参数</DialogTab>
    </DialogTabs>
    <DialogPanel>
      <ParamBox>
        <ParamTable>
          <colgroup><col style={{ width: 145 }} /><col /></colgroup>
          <thead><tr><th>变量</th><th>赋值</th></tr></thead>
          <tbody>
            {params.map(([kind, name, value], i) => (
              <ParamRow key={i} $heading={name.startsWith("*")}>
                <td><CellLine $gap={2}><KindIcon kind={kind} />{name}</CellLine></td>
                <td>{value}</td>
              </ParamRow>
            ))}
          </tbody>
        </ParamTable>
        <Scroll $top={10} $length={168} />
      </ParamBox>
      <SideButtons>
        <PushButton>加载(L)</PushButton>
        <PushButton>保存(S)</PushButton>
      </SideButtons>
    </DialogPanel>
    <DialogFoot>
      <PushButton>确定</PushButton><PushButton>取消</PushButton><PushButton>重设</PushButton>
    </DialogFoot>
  </Dialog>
);

export default function App() {
  return (
    <Page>
      <Global />
      <Header />
      <Workspace>
        <Docks>
          <MarketWatch />
          <Navigator />
        </Docks>
        <ChartColumn>
          <ChartFrame><PriceChart /></ChartFrame>
          <ChartTabs>
            <button>BTCUSD,M15</button>
            <span>|</span>
            <button>GBPUSD,M1</button>
            <Arrows>
              <Svg w={3} h={5}><path d="M3 0v5L0 2.500z" fill="#888" /></Svg>
              <Svg w={3} h={5}><path d="M0 0v5l3-2.500z" fill="#888" /></Svg>
            </Arrows>
          </ChartTabs>
        </ChartColumn>
      </Workspace>
      <Orders />
      <ExpertDialog />
      <Brand>
        <BrandMark />
        <BrandText>
          <BrandName>精品EA</BrandName>
          <BrandSite>eaclubshare.com</BrandSite>
        </BrandText>
      </Brand>
    </Page>
  );
}
